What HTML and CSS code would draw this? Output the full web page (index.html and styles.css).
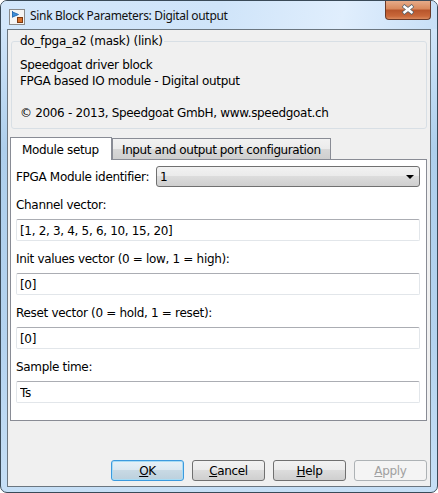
FILE: index.html
```html
<!DOCTYPE html>
<html lang="en">

<head>
    <meta charset="UTF-8">
    <title>Sink Block Parameters: Digital output</title>
    <link rel="stylesheet" href="styles.css">
</head>

<body>
    <div class="window">
        <div class="titlebar">
            <svg class="app-icon" width="16" height="16" viewBox="0 0 16 16">
                <rect x="0.5" y="0.5" width="15" height="15" fill="#f4f4f4" stroke="#8a8a8a"/>
                <path d="M3.5 2v6.5M3.5 3l6 2.5-6 2.5z" fill="#3f8fd8" stroke="#2a6fb5"/>
                <rect x="8.5" y="8.5" width="5" height="5" fill="#d9722c" stroke="#7c3a12"/>
            </svg>
            <span class="title">Sink Block Parameters: Digital output</span>
            <div class="close">
                <svg width="14" height="11" viewBox="0 0 14 11">
                    <path d="M2 1.5l10 8M12 1.5l-10 8" stroke="#59636b" stroke-width="4"/>
                    <path d="M2.5 2l9 7M11.5 2l-9 7" stroke="#fff" stroke-width="2.4"/>
                </svg>
            </div>
        </div>
        <div class="client">
            <fieldset class="info">
                <legend>do_fpga_a2 (mask) (link)</legend>
                <p>Speedgoat driver block<br>FPGA based IO module - Digital output</p>
                <p>© 2006 - 2013, Speedgoat GmbH, www.speedgoat.ch</p>
            </fieldset>

            <div class="tabs">
                <div class="tab active">Module setup</div>
                <div class="tab">Input and output port configuration</div>
            </div>
            <div class="panel">
                <div class="select-row">
                    <span>FPGA Module identifier:</span>
                    <div class="select">
                        <span>1</span>
                        <span class="arrow"></span>
                    </div>
                </div>
                <label for="channel">Channel vector:</label>
                <input id="channel" type="text" value="[1, 2, 3, 4, 5, 6, 10, 15, 20]">
                <label for="init">Init values vector (0 = low, 1 = high):</label>
                <input id="init" type="text" value="[0]">
                <label for="reset">Reset vector (0 = hold, 1 = reset):</label>
                <input id="reset" type="text" value="[0]">
                <label for="sample">Sample time:</label>
                <input id="sample" type="text" value="Ts">
            </div>

            <div class="buttons">
                <button class="btn default" type="button"><u>O</u>K</button>
                <button class="btn" type="button"><u>C</u>ancel</button>
                <button class="btn" type="button"><u>H</u>elp</button>
                <button class="btn" type="button" disabled><u>A</u>pply</button>
            </div>
        </div>
    </div>
</body>

</html>
```

FILE: styles.css
```css
body {
    margin: 0;
    padding: 0;
    background-color: #fff;
    font-family: "DejaVu Sans", sans-serif;
    font-size: 12px;
    letter-spacing: -0.32px;
    color: #000;
}

.window {
    width: 438px;
    height: 493px;
    box-sizing: border-box;
    display: flex;
    flex-direction: column;
    background: linear-gradient(#d3e7fb 0%, #cfe4f9 6%, #aecfec 30%, #b4d3ef 70%, #c6dff6 100%);
    border: 1px solid #3a4a58;
    border-radius: 7px;
    overflow: hidden;
}

.titlebar {
    height: 28px;
    flex: none;
    display: flex;
    align-items: flex-start;
    padding-left: 8px;
    background: linear-gradient(100deg, #d3e7fb 0%, #cfe4f9 50%, #e0eefd 78%, #c8dff6 100%);
}

.app-icon {
    margin-top: 8px;
}

.title {
    margin-left: 5px;
    margin-top: 7px;
    font-family: "Noto Sans", sans-serif;
    font-size: 12px;
    letter-spacing: -0.32px;
    line-height: 16px;
    color: #111;
}

.close {
    margin-left: auto;
    margin-right: 6px;
    margin-top: -1px;
    width: 46px;
    height: 20px;
    box-sizing: border-box;
    display: flex;
    align-items: center;
    justify-content: center;
    background: linear-gradient(#e8b08f 0%, #d98a5e 45%, #b8562c 55%, #c9683a 85%, #d98a5e 100%);
    border: 1px solid #6a3a28;
    border-top: none;
    border-radius: 0 0 4px 4px;
}

.client {
    flex: 1;
    margin: 0 6px 5px 6px;
    padding: 0 3px;
    display: flex;
    flex-direction: column;
    background-color: #f0f0f0;
    border: 1px solid #6b7680;
}

.info {
    margin: 4px 0 0 0;
    padding: 0 0 0 8px;
    height: 95px;
    box-sizing: border-box;
    border: 1px solid #d8dfe5;
    border-radius: 3px;
}

.info legend {
    padding: 0 1px 0 0;
    line-height: 14px;
    letter-spacing: -0.25px;
}

.info p {
    margin: 9px 0 0 0;
    line-height: 16px;
}

.info p + p {
    margin-top: 16px;
}

.tabs {
    display: flex;
    align-items: flex-end;
    height: 22px;
    margin-top: 8px;
    margin-left: -1px;
}

.tab {
    width: 219px;
    height: 21px;
    box-sizing: border-box;
    padding: 0 0 0 9px;
    line-height: 22px;
    letter-spacing: -0.4px;
    background: linear-gradient(#f2f2f2 0%, #ebebeb 50%, #d8d8d8 51%, #cfcfcf 100%);
    border: 1px solid #898c95;
    border-bottom: none;
}

.tab.active {
    height: 23px;
    width: 102px;
    margin-bottom: -1px;
    padding: 0 0 0 11px;
    line-height: 24px;
    letter-spacing: -0.35px;
    background: #fff;
    position: relative;
}

.panel {
    height: 262px;
    box-sizing: border-box;
    padding: 6px 6px 0 5px;
    width: 417px;
    margin-left: -1px;
    display: flex;
    flex-direction: column;
    background-color: #fff;
    border: 1px solid #898c95;
}

.select-row {
    display: flex;
    align-items: center;
    justify-content: space-between;
    height: 21px;
}

.select {
    width: 264px;
    height: 21px;
    box-sizing: border-box;
    padding: 0 5px 0 3px;
    display: flex;
    align-items: center;
    justify-content: space-between;
    background: linear-gradient(#f2f2f2 0%, #ebebeb 45%, #dcdcdc 50%, #cfcfcf 100%);
    border: 1px solid #707070;
    border-radius: 3px;
}

.arrow {
    width: 0;
    height: 0;
    border-left: 4px solid transparent;
    border-right: 4px solid transparent;
    border-top: 4px solid #000;
}

label {
    display: block;
    height: 14px;
    line-height: 14px;
    margin-top: 11px;
    margin-bottom: 7px;
}

input[type="text"] {
    display: block;
    width: 100%;
    height: 22px;
    box-sizing: border-box;
    margin: 0;
    padding: 1px 3px 0 3px;
    font: inherit;
    letter-spacing: inherit;
    color: #000;
    background-color: #fff;
    border: 1px solid #e2e6ea;
    border-top-color: #abadb3;
    border-radius: 2px;
    outline: none;
}

.buttons {
    margin-top: auto;
    margin-bottom: 5px;
    display: flex;
    justify-content: flex-end;
    gap: 8px;
}

.btn {
    width: 73px;
    height: 21px;
    padding: 0;
    font: inherit;
    letter-spacing: inherit;
    color: #000;
    background: linear-gradient(#f2f2f2 0%, #ebebeb 48%, #dcdcdc 50%, #cfcfcf 100%);
    border: 1px solid #707070;
    border-radius: 3px;
}

.btn.default {
    background: linear-gradient(#e6f1f8 0%, #dbe8f1 48%, #c8d9e4 50%, #bcd0dd 100%);
    border-color: #3c9ade;
    box-shadow: inset 0 0 0 1px #a8dcf5;
}

.btn:disabled {
    color: #a0a0a0;
    background: #f4f4f4;
    border-color: #adb2b5;
}
```
